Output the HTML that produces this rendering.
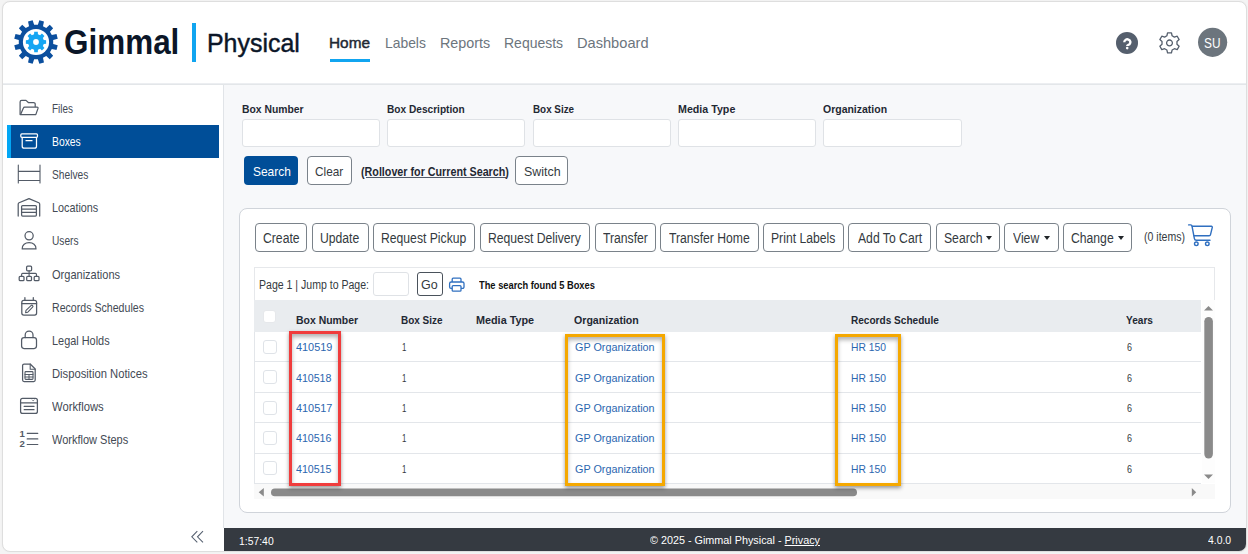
<!DOCTYPE html>
<html><head><meta charset="utf-8">
<style>
*{box-sizing:border-box;margin:0;padding:0}
html,body{width:1248px;height:554px;overflow:hidden;background:#f4f4f4;font-family:"Liberation Sans",sans-serif;color:#212529}
.a{position:absolute}
.t{position:absolute;white-space:nowrap;transform-origin:0 0}
.btn{position:absolute;border:1px solid #7a828a;border-radius:4px;background:#fff}
.inp{position:absolute;border:1px solid #dfe2e6;border-radius:3px;background:#fff}
.cb{position:absolute;width:14px;height:14px;border:1px solid #dfe3e8;border-radius:3px;background:#fff}
.caret{position:absolute;width:0;height:0;border-left:3.5px solid transparent;border-right:3.5px solid transparent;border-top:4px solid #212529}
.sep{position:absolute;left:254px;width:947px;height:1px;background:#e3e6ea}
.hl{position:absolute;border:3px solid #f03c3c;box-shadow:0 2px 4px rgba(0,0,0,.4), inset 0 3px 4px rgba(0,0,0,.3)}
.ol{position:absolute;border:3px solid #f5a800;box-shadow:0 2px 4px rgba(0,0,0,.4), inset 0 3px 4px rgba(0,0,0,.3)}
</style></head><body>
<!-- frame -->
<div class="a" style="left:2px;top:1px;width:1245px;height:551px;border:1px solid #dedede;border-radius:8px;background:#fff;box-shadow:0 0 1.5px rgba(0,0,0,.06)"></div>
<!-- header border -->
<div class="a" style="left:3px;top:83px;width:1243px;height:1px;background:#eceef1"></div><div class="a" style="left:3px;top:84px;width:1243px;height:1px;background:#e3e6e9"></div>
<!-- sidebar border -->
<div class="a" style="left:223px;top:85px;width:1px;height:443px;background:#e1e4e8"></div>
<!-- content bg -->
<div class="a" style="left:224px;top:85px;width:1022px;height:443px;background:#f7f8fa"></div>
<!-- footer -->
<div class="a" style="left:224px;top:528px;width:1022px;height:23px;background:#353a41;border-bottom-right-radius:7px"></div>

<!-- logo -->
<svg class="a" style="left:14px;top:20px" width="44" height="44" viewBox="0 0 44 44">
  <path d="M23.88,4.80 L25.35,0.26 L29.97,1.50 L28.97,6.17 L32.23,8.05 L35.77,4.84 L39.16,8.23 L35.95,11.77 L37.83,15.03 L42.50,14.03 L43.74,18.65 L39.20,20.12 L39.20,23.88 L43.74,25.35 L42.50,29.97 L37.83,28.97 L35.95,32.23 L39.16,35.77 L35.77,39.16 L32.23,35.95 L28.97,37.83 L29.97,42.50 L25.35,43.74 L23.88,39.20 L20.12,39.20 L18.65,43.74 L14.03,42.50 L15.03,37.83 L11.77,35.95 L8.23,39.16 L4.84,35.77 L8.05,32.23 L6.17,28.97 L1.50,29.97 L0.26,25.35 L4.80,23.88 L4.80,20.12 L0.26,18.65 L1.50,14.03 L6.17,15.03 L8.05,11.77 L4.84,8.23 L8.23,4.84 L11.77,8.05 L15.03,6.17 L14.03,1.50 L18.65,0.26 L20.12,4.80Z" fill="#0b4f9e"/>
  <circle cx="22" cy="22" r="13.1" fill="#fff"/>
  <path d="M20.06,14.24 L20.21,11.86 L23.79,11.86 L23.94,14.24 L26.12,15.14 L27.91,13.56 L30.44,16.09 L28.86,17.88 L29.76,20.06 L32.14,20.21 L32.14,23.79 L29.76,23.94 L28.86,26.12 L30.44,27.91 L27.91,30.44 L26.12,28.86 L23.94,29.76 L23.79,32.14 L20.21,32.14 L20.06,29.76 L17.88,28.86 L16.09,30.44 L13.56,27.91 L15.14,26.12 L14.24,23.94 L11.86,23.79 L11.86,20.21 L14.24,20.06 L15.14,17.88 L13.56,16.09 L16.09,13.56 L17.88,15.14Z" fill="#16a6f3"/>
  <circle cx="22" cy="22" r="2.9" fill="#fff"/>
</svg>
<div class="a" style="left:192.4px;top:22.6px;width:4px;height:39px;background:#11a5f0"></div>
<div class="a" style="left:330.2px;top:58.5px;width:39.6px;height:3.8px;background:#11a5f0"></div>

<!-- header right icons -->
<svg class="a" style="left:0;top:0" width="1248" height="90" viewBox="0 0 1248 90">
  <circle cx="1127" cy="42.9" r="11" fill="#555f6d"/>
  <path d="M1124.3,42.3 A3.05,2.9 0 1 1 1129.6,44.2 C1128.2,45 1127.2,45.2 1127.2,46" fill="none" stroke="#fff" stroke-width="2.4" stroke-linecap="butt"/>
  <circle cx="1127.2" cy="48.1" r="1.3" fill="#fff"/>
  <g transform="translate(1169.5,42.9)" fill="none" stroke="#555f6d" stroke-width="1.3" stroke-linejoin="round">
    <path d="M-2.60,-7.14 L-1.95,-10.01 L1.95,-10.01 L2.60,-7.14 L4.89,-5.82 L7.70,-6.69 L9.64,-3.32 L7.48,-1.32 L7.48,1.32 L9.64,3.32 L7.70,6.69 L4.89,5.82 L2.60,7.14 L1.95,10.01 L-1.95,10.01 L-2.60,7.14 L-4.89,5.82 L-7.70,6.69 L-9.64,3.32 L-7.48,1.32 L-7.48,-1.32 L-9.64,-3.32 L-7.70,-6.69 L-4.89,-5.82Z"/>
    <circle r="2.9"/>
  </g>
  <circle cx="1212.6" cy="42.3" r="14.6" fill="#6c757d"/>
</svg>

<!-- sidebar active -->
<div class="a" style="left:7px;top:125px;width:212px;height:33px;background:#004e98"></div>
<div class="a" style="left:7px;top:125px;width:3.8px;height:33px;background:#02a7f5"></div>

<!-- sidebar icons -->
<svg class="a" style="left:0;top:0" width="230" height="554" viewBox="0 0 230 554" fill="none" stroke="#535b67" stroke-width="1.25" stroke-linecap="round" stroke-linejoin="round">
  <!-- files -->
  <path d="M20.1,114.6 V102 a1.6,1.6 0 0 1 1.6,-1.6 H26 l2.3,2.1 H33.6 a1.6,1.6 0 0 1 1.6,1.6 V106.5"/>
  <path d="M20.6,114.6 L23.4,108 a1.4,1.4 0 0 1 1.3,-0.9 H37 a1,1 0 0 1 1,1.3 L35.8,114.6 Z"/>
  <!-- boxes (white) -->
  <g stroke="#ffffff">
    <rect x="20.8" y="133.9" width="16.7" height="3.4" rx="1"/>
    <path d="M22.2,137.6 V146.2 a2,2 0 0 0 2,2 H34.5 a2,2 0 0 0 2,-2 V137.6"/>
    <path d="M26,140.7 H32"/>
  </g>
  <!-- shelves -->
  <path d="M18.3,165 V183 M40,165 V183 M18.3,171.4 H40 M18.3,180.5 H40" stroke-width="1.1"/>
  <!-- locations garage -->
  <path d="M18.2,216 V204.2 a1.5,1.5 0 0 1 0.9,-1.4 L29,198.6 L38.8,202.8 a1.5,1.5 0 0 1 0.9,1.4 V216"/>
  <rect x="21.6" y="205.5" width="14.8" height="10.5" rx="1"/>
  <path d="M21.6,209.1 H36.4 M21.6,212.4 H36.4"/>
  <!-- users -->
  <circle cx="29.1" cy="235.8" r="4.1"/>
  <path d="M22.2,248.9 C22,244.6 25.3,242.7 29.1,242.7 C32.9,242.7 36.2,244.6 36,248.9 Z"/>
  <!-- organizations -->
  <rect x="26.6" y="266.2" width="5" height="4.6" rx="1"/>
  <path d="M29.1,270.8 V273.4 M21.6,276.2 V274.4 a1,1 0 0 1 1,-1 H35.5 a1,1 0 0 1 1,1 V276.2 M29.1,273.4 V276.2" stroke-width="1.1"/>
  <rect x="19.2" y="276.3" width="4.8" height="4.4" rx="1"/>
  <rect x="26.7" y="276.3" width="4.8" height="4.4" rx="1"/>
  <rect x="34.2" y="276.3" width="4.8" height="4.4" rx="1"/>
  <!-- records schedules -->
  <rect x="21.8" y="300.4" width="14.8" height="14.6" rx="2"/>
  <path d="M21.8,303.6 H36.6 M24.9,297.6 V300.4 M33.3,297.6 V300.4"/>
  <path d="M25.6,312.6 L26,310.4 L31,305.6 a1.1,1.1 0 0 1 1.6,1.6 L27.8,312.2 Z" stroke-width="1.1"/>
  <!-- legal holds -->
  <rect x="21.6" y="337.6" width="14.9" height="10.9" rx="2.4"/>
  <path d="M25.2,337.6 V335 a3.9,3.9 0 0 1 7.8,0 V337.6"/>
  <!-- disposition notices -->
  <path d="M22.6,365.5 a1.5,1.5 0 0 1 1.5,-1.5 H30.2 L35.2,369 V380 a1.5,1.5 0 0 1 -1.5,1.5 H24.1 a1.5,1.5 0 0 1 -1.5,-1.5 Z"/>
  <path d="M30.2,364 V369.3 H35.2" stroke-width="1.1"/>
  <rect x="25" y="371.6" width="8" height="7.8" rx="0.8" stroke-width="1.1"/>
  <path d="M25,374.5 H33 M25,377 H33 M29,374.5 V379.4" stroke-width="1"/>
  <!-- workflows -->
  <rect x="20.6" y="398.4" width="16.8" height="15" rx="2"/>
  <path d="M20.6,402.9 H37.4 M24.2,406.4 H34 M24.2,409.7 H34"/>
  <path d="M32.3,400 L33.2,400.9 L34.1,400" stroke-width="0.8"/>
  <!-- workflow steps -->
  <path d="M27.2,433.3 H37.8 M27.2,438.9 H37.8 M27.2,444.5 H37.8" stroke-width="1.2"/>
  <!-- collapse chevrons -->
  <path d="M197.3,531.2 L191.8,536.8 L197.3,542.4 M203,531.2 L197.5,536.8 L203,542.4" stroke="#566070" stroke-width="1.05" stroke-linecap="butt" stroke-linejoin="miter"/>
</svg>
<div class="t" style="left:19.6px;top:428.9px;font-size:9.6px;line-height:9.6px;font-weight:700;color:#535b67">1</div>
<div class="t" style="left:19.6px;top:438.8px;font-size:9.6px;line-height:9.6px;font-weight:700;color:#535b67">2</div>

<!-- search form -->
<div class="inp" style="left:242px;top:119px;width:138px;height:28px"></div>
<div class="inp" style="left:387.4px;top:119px;width:138px;height:28px"></div>
<div class="inp" style="left:532.5px;top:119px;width:138px;height:28px"></div>
<div class="inp" style="left:678px;top:119px;width:138px;height:28px"></div>
<div class="inp" style="left:823px;top:119px;width:138.5px;height:28px"></div>
<div class="a" style="left:244px;top:156.4px;width:54.2px;height:28.3px;background:#004e98;border-radius:4px"></div>
<div class="btn" style="left:307.3px;top:156.4px;width:44.5px;height:28.3px"></div>
<div class="btn" style="left:514.8px;top:156.4px;width:52.9px;height:28.3px"></div>
<div class="a" style="left:365.5px;top:177px;width:140px;height:1px;background:#4f5866"></div>

<!-- card -->
<div class="a" style="left:239px;top:208px;width:992px;height:305px;border:1px solid #d0d4da;border-radius:8px;background:#fff"></div>
<div class="btn" style="left:254.5px;width:52.8px;top:223.4px;height:28.2px"></div>
<div class="t" style="left:262.53px;top:231.10px;font-size:14px;line-height:14px;color:#343a40;transform:scaleX(0.87)">Create</div>
<div class="btn" style="left:311.5px;width:57.1px;top:223.4px;height:28.2px"></div>
<div class="t" style="left:319.88px;top:231.10px;font-size:14px;line-height:14px;color:#343a40;transform:scaleX(0.87)">Update</div>
<div class="btn" style="left:373.2px;width:102.2px;top:223.4px;height:28.2px"></div>
<div class="t" style="left:381.12px;top:231.10px;font-size:14px;line-height:14px;color:#343a40;transform:scaleX(0.87)">Request Pickup</div>
<div class="btn" style="left:479.7px;width:110.7px;top:223.4px;height:28.2px"></div>
<div class="t" style="left:488.24px;top:231.10px;font-size:14px;line-height:14px;color:#343a40;transform:scaleX(0.87)">Request Delivery</div>
<div class="btn" style="left:594.6px;width:61.4px;top:223.4px;height:28.2px"></div>
<div class="t" style="left:602.71px;top:231.10px;font-size:14px;line-height:14px;color:#343a40;transform:scaleX(0.87)">Transfer</div>
<div class="btn" style="left:660.2px;width:98.7px;top:223.4px;height:28.2px"></div>
<div class="t" style="left:669.07px;top:231.10px;font-size:14px;line-height:14px;color:#343a40;transform:scaleX(0.87)">Transfer Home</div>
<div class="btn" style="left:763.1px;width:81.3px;top:223.4px;height:28.2px"></div>
<div class="t" style="left:771.16px;top:231.10px;font-size:14px;line-height:14px;color:#343a40;transform:scaleX(0.87)">Print Labels</div>
<div class="btn" style="left:848.4px;width:83.1px;top:223.4px;height:28.2px"></div>
<div class="t" style="left:857.75px;top:231.10px;font-size:14px;line-height:14px;color:#343a40;transform:scaleX(0.87)">Add To Cart</div>
<div class="btn" style="left:936.1px;width:63.7px;top:223.4px;height:28.2px"></div>
<div class="t" style="left:944.00px;top:231.10px;font-size:14px;line-height:14px;color:#343a40;transform:scaleX(0.87)">Search</div>
<div class="caret" style="left:985.9px;top:236px"></div>
<div class="btn" style="left:1004.3px;width:54.5px;top:223.4px;height:28.2px"></div>
<div class="t" style="left:1013.07px;top:231.10px;font-size:14px;line-height:14px;color:#343a40;transform:scaleX(0.87)">View</div>
<div class="caret" style="left:1044.0px;top:236px"></div>
<div class="btn" style="left:1063.2px;width:69.2px;top:223.4px;height:28.2px"></div>
<div class="t" style="left:1071.37px;top:231.10px;font-size:14px;line-height:14px;color:#343a40;transform:scaleX(0.87)">Change</div>
<div class="caret" style="left:1118.2px;top:236px"></div>
<!-- cart -->
<svg class="a" style="left:1180px;top:215px" width="40" height="40" viewBox="1180 215 40 40" fill="none" stroke="#2f6fc0" stroke-width="1.4" stroke-linecap="round" stroke-linejoin="round">
  <path d="M1188.6,224.9 H1190.6 a1.4,1.4 0 0 1 1.4,1.2 L1194.4,238.6 a2,2 0 0 0 2,1.7 H1210"/>
  <path d="M1192.3,226.3 H1211.4 a0.9,0.9 0 0 1 0.9,1.1 L1210.5,234.6 a1.4,1.4 0 0 1 -1.4,1.1 H1194"/>
  <circle cx="1196.3" cy="243.8" r="1.8"/>
  <circle cx="1207.3" cy="243.8" r="1.8"/>
</svg>

<!-- pager -->
<div class="a" style="left:254px;top:267px;width:961.2px;height:34px;border:1px solid #e6e8eb;border-bottom:none;background:#fff"></div>
<div class="inp" style="left:372.6px;top:271.5px;width:36px;height:24px"></div>
<div class="btn" style="left:417.3px;top:271.5px;width:25.3px;height:24px;border-color:#4a525b;border-radius:3px"></div>
<svg class="a" style="left:445px;top:274px" width="24" height="22" viewBox="445 274 24 22" fill="none" stroke="#3070c0" stroke-width="1.3" stroke-linejoin="round">
  <path d="M452.2,282 V279.2 a1,1 0 0 1 1,-1 H460 a1,1 0 0 1 1,1 V282"/>
  <path d="M452.2,288.4 H451 a1.4,1.4 0 0 1 -1.4,-1.4 V283.6 a1.6,1.6 0 0 1 1.6,-1.6 H462.4 a1.6,1.6 0 0 1 1.6,1.6 V287 a1.4,1.4 0 0 1 -1.4,1.4 H461"/>
  <rect x="452.2" y="285.6" width="8.8" height="5.6" rx="1"/>
</svg>

<!-- table -->
<div class="a" style="left:254px;top:300.2px;width:947px;height:31.5px;background:#e9ecef"></div>
<div class="a" style="left:254px;top:331.7px;width:1px;height:152px;background:#e3e6ea"></div>
<div class="sep" style="top:361px"></div>
<div class="sep" style="top:391.6px"></div>
<div class="sep" style="top:422.2px"></div>
<div class="sep" style="top:452.5px"></div>
<div class="sep" style="top:483px"></div>
<div class="cb" style="left:262.8px;top:309.8px;width:13.5px;height:13.2px;border-color:#e6e8eb"></div>
<div class="cb" style="left:263px;top:339.5px"></div>
<div class="cb" style="left:263px;top:370px"></div>
<div class="cb" style="left:263px;top:400.5px"></div>
<div class="cb" style="left:263px;top:430.8px"></div>
<div class="cb" style="left:263px;top:461.2px"></div>
<!-- scrollbars -->
<div class="a" style="left:1201.5px;top:300.2px;width:13.7px;height:183px;background:#fdfdfd"></div>
<div class="a" style="left:254px;top:483.8px;width:961.2px;height:15.4px;background:#f9f9f9"></div>
<svg class="a" style="left:250px;top:295px" width="970" height="210" viewBox="250 295 970 210" fill="#8a8a8a">
  <path d="M1204,310.6 L1208.5,306 L1213,310.6 Z"/>
  <path d="M1204,474.5 L1208.5,479 L1213,474.5 Z"/>
  <rect x="1204.3" y="317" width="8.6" height="141.4" rx="4.3"/>
  <path d="M263.8,488 L258.7,492.2 L263.8,496.4 Z"/>
  <path d="M1191.8,488 L1196.2,492.2 L1191.8,496.4 Z"/>
  <rect x="271" y="488.6" width="586" height="7.6" rx="3.8"/>
</svg>

<!-- highlight boxes -->
<div class="hl" style="left:289px;top:331px;width:52px;height:155px"></div>
<div class="ol" style="left:565.1px;top:334.1px;width:99.7px;height:152px"></div>
<div class="ol" style="left:835px;top:334px;width:66px;height:152px"></div>

<div class="t" style="left:64.09px;top:25.46px;font-size:34.5px;line-height:34.5px;font-weight:700;color:#0b1628;transform:scaleX(0.9116);">Gimmal<span id="bl0" style="display:inline-block;width:0;height:0"></span></div>
<div class="t" style="left:207.01px;top:30.36px;font-size:26.4px;line-height:26.4px;font-weight:400;color:#0b1628;transform:scaleX(0.9444);-webkit-text-stroke:0.45px #0b1628;">Physical<span id="bl1" style="display:inline-block;width:0;height:0"></span></div>
<div class="t" style="left:329.18px;top:35.06px;font-size:15px;line-height:15px;font-weight:400;color:#1f2833;transform:scaleX(1.0241);-webkit-text-stroke:0.45px #1f2833;">Home<span id="bl2" style="display:inline-block;width:0;height:0"></span></div>
<div class="t" style="left:384.87px;top:35.06px;font-size:15px;line-height:15px;font-weight:400;color:#6c757d;transform:scaleX(0.9250);">Labels<span id="bl3" style="display:inline-block;width:0;height:0"></span></div>
<div class="t" style="left:439.94px;top:35.06px;font-size:15px;line-height:15px;font-weight:400;color:#6c757d;transform:scaleX(0.9565);">Reports<span id="bl4" style="display:inline-block;width:0;height:0"></span></div>
<div class="t" style="left:504.37px;top:35.06px;font-size:15px;line-height:15px;font-weight:400;color:#6c757d;transform:scaleX(0.9326);">Requests<span id="bl5" style="display:inline-block;width:0;height:0"></span></div>
<div class="t" style="left:577.03px;top:35.06px;font-size:15px;line-height:15px;font-weight:400;color:#6c757d;transform:scaleX(0.9745);">Dashboard<span id="bl6" style="display:inline-block;width:0;height:0"></span></div>
<div class="t" style="left:1203.80px;top:35.66px;font-size:14px;line-height:14px;font-weight:400;color:#ffffff;transform:scaleX(0.8481);">SU<span id="bl7" style="display:inline-block;width:0;height:0"></span></div>
<div class="t" style="left:51.50px;top:103.15px;font-size:12.1px;line-height:12.1px;font-weight:400;color:#434a54;transform:scaleX(0.8200);">Files<span id="bl8" style="display:inline-block;width:0;height:0"></span></div>
<div class="t" style="left:51.50px;top:136.24px;font-size:12.1px;line-height:12.1px;font-weight:400;color:#ffffff;transform:scaleX(0.8551);">Boxes<span id="bl9" style="display:inline-block;width:0;height:0"></span></div>
<div class="t" style="left:51.50px;top:169.30px;font-size:12.1px;line-height:12.1px;font-weight:400;color:#434a54;transform:scaleX(0.8446);">Shelves<span id="bl10" style="display:inline-block;width:0;height:0"></span></div>
<div class="t" style="left:51.50px;top:202.36px;font-size:12.1px;line-height:12.1px;font-weight:400;color:#434a54;transform:scaleX(0.8932);">Locations<span id="bl11" style="display:inline-block;width:0;height:0"></span></div>
<div class="t" style="left:51.50px;top:235.43px;font-size:12.1px;line-height:12.1px;font-weight:400;color:#434a54;transform:scaleX(0.8404);">Users<span id="bl12" style="display:inline-block;width:0;height:0"></span></div>
<div class="t" style="left:51.50px;top:268.52px;font-size:12.1px;line-height:12.1px;font-weight:400;color:#434a54;transform:scaleX(0.9119);">Organizations<span id="bl13" style="display:inline-block;width:0;height:0"></span></div>
<div class="t" style="left:51.50px;top:301.58px;font-size:12.1px;line-height:12.1px;font-weight:400;color:#434a54;transform:scaleX(0.8767);">Records Schedules<span id="bl14" style="display:inline-block;width:0;height:0"></span></div>
<div class="t" style="left:51.50px;top:334.66px;font-size:12.1px;line-height:12.1px;font-weight:400;color:#434a54;transform:scaleX(0.9025);">Legal Holds<span id="bl15" style="display:inline-block;width:0;height:0"></span></div>
<div class="t" style="left:51.50px;top:367.72px;font-size:12.1px;line-height:12.1px;font-weight:400;color:#434a54;transform:scaleX(0.9291);">Disposition Notices<span id="bl16" style="display:inline-block;width:0;height:0"></span></div>
<div class="t" style="left:51.50px;top:400.80px;font-size:12.1px;line-height:12.1px;font-weight:400;color:#434a54;transform:scaleX(0.9297);">Workflows<span id="bl17" style="display:inline-block;width:0;height:0"></span></div>
<div class="t" style="left:51.50px;top:433.86px;font-size:12.1px;line-height:12.1px;font-weight:400;color:#434a54;transform:scaleX(0.9099);">Workflow Steps<span id="bl18" style="display:inline-block;width:0;height:0"></span></div>
<div class="t" style="left:241.70px;top:104.16px;font-size:11px;line-height:11px;font-weight:700;color:#1f2833;transform:scaleX(0.9423);">Box Number<span id="bl19" style="display:inline-block;width:0;height:0"></span></div>
<div class="t" style="left:387.30px;top:104.16px;font-size:11px;line-height:11px;font-weight:700;color:#1f2833;transform:scaleX(0.9205);">Box Description<span id="bl20" style="display:inline-block;width:0;height:0"></span></div>
<div class="t" style="left:532.50px;top:104.16px;font-size:11px;line-height:11px;font-weight:700;color:#1f2833;transform:scaleX(0.8966);">Box Size<span id="bl21" style="display:inline-block;width:0;height:0"></span></div>
<div class="t" style="left:677.90px;top:104.16px;font-size:11px;line-height:11px;font-weight:700;color:#1f2833;transform:scaleX(0.9700);">Media Type<span id="bl22" style="display:inline-block;width:0;height:0"></span></div>
<div class="t" style="left:823.10px;top:104.16px;font-size:11px;line-height:11px;font-weight:700;color:#1f2833;transform:scaleX(0.9525);">Organization<span id="bl23" style="display:inline-block;width:0;height:0"></span></div>
<div class="t" style="left:252.60px;top:165.05px;font-size:13.5px;line-height:13.5px;font-weight:400;color:#ffffff;transform:scaleX(0.8849);">Search<span id="bl24" style="display:inline-block;width:0;height:0"></span></div>
<div class="t" style="left:314.80px;top:165.05px;font-size:13.5px;line-height:13.5px;font-weight:400;color:#343a40;transform:scaleX(0.8729);">Clear<span id="bl25" style="display:inline-block;width:0;height:0"></span></div>
<div class="t" style="left:361.40px;top:165.96px;font-size:12px;line-height:12px;font-weight:700;color:#1f2833;transform:scaleX(0.8944);">(Rollover for Current Search)<span id="bl26" style="display:inline-block;width:0;height:0"></span></div>
<div class="t" style="left:523.60px;top:165.05px;font-size:13.5px;line-height:13.5px;font-weight:400;color:#343a40;transform:scaleX(0.9197);">Switch<span id="bl27" style="display:inline-block;width:0;height:0"></span></div>
<div class="t" style="left:1144.00px;top:231.46px;font-size:12px;line-height:12px;font-weight:400;color:#343a40;transform:scaleX(0.8784);">(0 items)<span id="bl28" style="display:inline-block;width:0;height:0"></span></div>
<div class="t" style="left:259.20px;top:279.15px;font-size:12px;line-height:12px;font-weight:400;color:#343a40;transform:scaleX(0.8786);">Page 1 | Jump to Page:<span id="bl29" style="display:inline-block;width:0;height:0"></span></div>
<div class="t" style="left:421.40px;top:278.16px;font-size:13.5px;line-height:13.5px;font-weight:400;color:#343a40;transform:scaleX(0.9257);">Go<span id="bl30" style="display:inline-block;width:0;height:0"></span></div>
<div class="t" style="left:478.80px;top:279.96px;font-size:11px;line-height:11px;font-weight:700;color:#111111;transform:scaleX(0.8464);">The search found 5 Boxes<span id="bl31" style="display:inline-block;width:0;height:0"></span></div>
<div class="t" style="left:295.90px;top:315.16px;font-size:11.5px;line-height:11.5px;font-weight:700;color:#1f2833;transform:scaleX(0.9086);">Box Number<span id="bl32" style="display:inline-block;width:0;height:0"></span></div>
<div class="t" style="left:400.80px;top:315.16px;font-size:11.5px;line-height:11.5px;font-weight:700;color:#1f2833;transform:scaleX(0.8667);">Box Size<span id="bl33" style="display:inline-block;width:0;height:0"></span></div>
<div class="t" style="left:476.40px;top:315.16px;font-size:11.5px;line-height:11.5px;font-weight:700;color:#1f2833;transform:scaleX(0.9401);">Media Type<span id="bl34" style="display:inline-block;width:0;height:0"></span></div>
<div class="t" style="left:574.40px;top:315.16px;font-size:11.5px;line-height:11.5px;font-weight:700;color:#1f2833;transform:scaleX(0.9223);">Organization<span id="bl35" style="display:inline-block;width:0;height:0"></span></div>
<div class="t" style="left:850.70px;top:315.16px;font-size:11.5px;line-height:11.5px;font-weight:700;color:#1f2833;transform:scaleX(0.8755);">Records Schedule<span id="bl36" style="display:inline-block;width:0;height:0"></span></div>
<div class="t" style="left:1125.90px;top:315.16px;font-size:11.5px;line-height:11.5px;font-weight:700;color:#1f2833;transform:scaleX(0.8778);">Years<span id="bl37" style="display:inline-block;width:0;height:0"></span></div>
<div class="t" style="left:295.80px;top:342.26px;font-size:11.8px;line-height:11.8px;font-weight:400;color:#2b66af;transform:scaleX(0.9226);">410519<span id="bl38" style="display:inline-block;width:0;height:0"></span></div>
<div class="t" style="left:401.50px;top:342.26px;font-size:11.8px;line-height:11.8px;font-weight:400;color:#343a40;transform:scaleX(0.6667);">1<span id="bl39" style="display:inline-block;width:0;height:0"></span></div>
<div class="t" style="left:574.70px;top:342.26px;font-size:11.8px;line-height:11.8px;font-weight:400;color:#2b66af;transform:scaleX(0.9152);">GP Organization<span id="bl40" style="display:inline-block;width:0;height:0"></span></div>
<div class="t" style="left:850.50px;top:342.26px;font-size:11.8px;line-height:11.8px;font-weight:400;color:#2b66af;transform:scaleX(0.8729);">HR 150<span id="bl41" style="display:inline-block;width:0;height:0"></span></div>
<div class="t" style="left:1126.70px;top:342.26px;font-size:11.8px;line-height:11.8px;font-weight:400;color:#343a40;transform:scaleX(0.7571);">6<span id="bl42" style="display:inline-block;width:0;height:0"></span></div>
<div class="t" style="left:295.80px;top:372.65px;font-size:11.8px;line-height:11.8px;font-weight:400;color:#2b66af;transform:scaleX(0.8994);">410518<span id="bl43" style="display:inline-block;width:0;height:0"></span></div>
<div class="t" style="left:401.50px;top:372.65px;font-size:11.8px;line-height:11.8px;font-weight:400;color:#343a40;transform:scaleX(0.6667);">1<span id="bl44" style="display:inline-block;width:0;height:0"></span></div>
<div class="t" style="left:574.70px;top:372.65px;font-size:11.8px;line-height:11.8px;font-weight:400;color:#2b66af;transform:scaleX(0.9152);">GP Organization<span id="bl45" style="display:inline-block;width:0;height:0"></span></div>
<div class="t" style="left:850.50px;top:372.65px;font-size:11.8px;line-height:11.8px;font-weight:400;color:#2b66af;transform:scaleX(0.8729);">HR 150<span id="bl46" style="display:inline-block;width:0;height:0"></span></div>
<div class="t" style="left:1126.70px;top:372.65px;font-size:11.8px;line-height:11.8px;font-weight:400;color:#343a40;transform:scaleX(0.7571);">6<span id="bl47" style="display:inline-block;width:0;height:0"></span></div>
<div class="t" style="left:295.80px;top:403.06px;font-size:11.8px;line-height:11.8px;font-weight:400;color:#2b66af;transform:scaleX(0.9226);">410517<span id="bl48" style="display:inline-block;width:0;height:0"></span></div>
<div class="t" style="left:401.50px;top:403.06px;font-size:11.8px;line-height:11.8px;font-weight:400;color:#343a40;transform:scaleX(0.6667);">1<span id="bl49" style="display:inline-block;width:0;height:0"></span></div>
<div class="t" style="left:574.70px;top:403.06px;font-size:11.8px;line-height:11.8px;font-weight:400;color:#2b66af;transform:scaleX(0.9152);">GP Organization<span id="bl50" style="display:inline-block;width:0;height:0"></span></div>
<div class="t" style="left:850.50px;top:403.06px;font-size:11.8px;line-height:11.8px;font-weight:400;color:#2b66af;transform:scaleX(0.8729);">HR 150<span id="bl51" style="display:inline-block;width:0;height:0"></span></div>
<div class="t" style="left:1126.70px;top:403.06px;font-size:11.8px;line-height:11.8px;font-weight:400;color:#343a40;transform:scaleX(0.7571);">6<span id="bl52" style="display:inline-block;width:0;height:0"></span></div>
<div class="t" style="left:295.80px;top:433.45px;font-size:11.8px;line-height:11.8px;font-weight:400;color:#2b66af;transform:scaleX(0.8994);">410516<span id="bl53" style="display:inline-block;width:0;height:0"></span></div>
<div class="t" style="left:401.50px;top:433.45px;font-size:11.8px;line-height:11.8px;font-weight:400;color:#343a40;transform:scaleX(0.6667);">1<span id="bl54" style="display:inline-block;width:0;height:0"></span></div>
<div class="t" style="left:574.70px;top:433.45px;font-size:11.8px;line-height:11.8px;font-weight:400;color:#2b66af;transform:scaleX(0.9152);">GP Organization<span id="bl55" style="display:inline-block;width:0;height:0"></span></div>
<div class="t" style="left:850.50px;top:433.45px;font-size:11.8px;line-height:11.8px;font-weight:400;color:#2b66af;transform:scaleX(0.8729);">HR 150<span id="bl56" style="display:inline-block;width:0;height:0"></span></div>
<div class="t" style="left:1126.70px;top:433.45px;font-size:11.8px;line-height:11.8px;font-weight:400;color:#343a40;transform:scaleX(0.7571);">6<span id="bl57" style="display:inline-block;width:0;height:0"></span></div>
<div class="t" style="left:295.80px;top:463.86px;font-size:11.8px;line-height:11.8px;font-weight:400;color:#2b66af;transform:scaleX(0.8994);">410515<span id="bl58" style="display:inline-block;width:0;height:0"></span></div>
<div class="t" style="left:401.50px;top:463.86px;font-size:11.8px;line-height:11.8px;font-weight:400;color:#343a40;transform:scaleX(0.6667);">1<span id="bl59" style="display:inline-block;width:0;height:0"></span></div>
<div class="t" style="left:574.70px;top:463.86px;font-size:11.8px;line-height:11.8px;font-weight:400;color:#2b66af;transform:scaleX(0.9152);">GP Organization<span id="bl60" style="display:inline-block;width:0;height:0"></span></div>
<div class="t" style="left:850.50px;top:463.86px;font-size:11.8px;line-height:11.8px;font-weight:400;color:#2b66af;transform:scaleX(0.8729);">HR 150<span id="bl61" style="display:inline-block;width:0;height:0"></span></div>
<div class="t" style="left:1126.70px;top:463.86px;font-size:11.8px;line-height:11.8px;font-weight:400;color:#343a40;transform:scaleX(0.7571);">6<span id="bl62" style="display:inline-block;width:0;height:0"></span></div>
<div class="t" style="left:239.00px;top:535.75px;font-size:11.5px;line-height:11.5px;font-weight:400;color:#ffffff;transform:scaleX(0.9033);">1:57:40<span id="bl63" style="display:inline-block;width:0;height:0"></span></div>
<div class="t" style="left:1208.30px;top:535.35px;font-size:11.5px;line-height:11.5px;font-weight:400;color:#ffffff;transform:scaleX(0.9015);">4.0.0<span id="bl64" style="display:inline-block;width:0;height:0"></span></div>
<div class="t" style="left:650.40px;top:534.93px;font-size:11.5px;line-height:11.5px;color:#fff;transform:scaleX(0.9389)">© 2025 - Gimmal Physical - <span style="text-decoration:underline">Privacy</span></div>
</body></html>
